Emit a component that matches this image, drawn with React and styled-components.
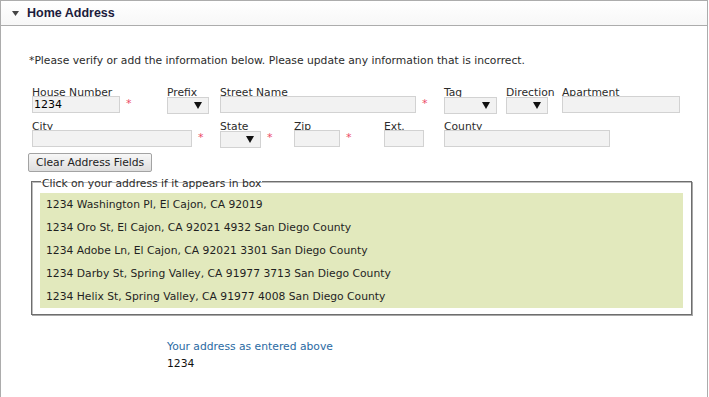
import React from "react";
import styled, { createGlobalStyle } from "styled-components";

const GlobalStyle = createGlobalStyle`
  html, body {
    margin: 0;
    padding: 0;
    background: #ffffff;
  }
  body {
    font-family: "DejaVu Sans", Verdana, sans-serif;
    font-size: 10.75px;
    color: #2b2b2b;
  }
`;

const rows = [
  [
    { label: "House Number", slot: 135, width: 88, value: "1234", required: true },
    { label: "Prefix", slot: 53, width: 42, select: true },
    { label: "Street Name", slot: 224, width: 196, required: true },
    { label: "Tag", slot: 62, width: 53, select: true },
    { label: "Direction", slot: 56, width: 42, select: true },
    { label: "Apartment", width: 118 }
  ],
  [
    { label: "City", slot: 188, width: 160, required: true },
    { label: "State", slot: 74, width: 41, select: true, required: true },
    { label: "Zip", slot: 90, width: 46, required: true },
    { label: "Ext.", slot: 60, width: 40 },
    { label: "County", width: 166 }
  ]
];

const suggestions = [
  "1234 Washington Pl, El Cajon, CA 92019",
  "1234 Oro St, El Cajon, CA 92021 4932 San Diego County",
  "1234 Adobe Ln, El Cajon, CA 92021 3301 San Diego County",
  "1234 Darby St, Spring Valley, CA 91977 3713 San Diego County",
  "1234 Helix St, Spring Valley, CA 91977 4008 San Diego County"
];

function Arrow() {
  return (
    <svg width="8" height="7" viewBox="0 0 8 7">
      <polygon points="0,0 8,0 4,7" fill="#111" />
    </svg>
  );
}

export default function App() {
  return (
    <>
      <GlobalStyle />
      <Panel>
        <Header>
          <Caret>
            <svg width="7" height="5" viewBox="0 0 7 5">
              <polygon points="0,0 7,0 3.5,5" fill="#444" />
            </svg>
          </Caret>
          <h3>Home Address</h3>
        </Header>
        <Body>
          <Note>*Please verify or add the information below. Please update any information that is incorrect.</Note>
          {rows.map((row, i) => (
            <FieldRow key={i}>
              {row.map((f) => (
                <Field key={f.label} $slot={f.slot}>
                  <Label>{f.label}</Label>
                  <InputRow>
                    {f.select ? (
                      <SelectBox $width={f.width}>
                        <Arrow />
                      </SelectBox>
                    ) : (
                      <TextInput $width={f.width} defaultValue={f.value || ""} />
                    )}
                    {f.required && <Required>*</Required>}
                  </InputRow>
                </Field>
              ))}
            </FieldRow>
          ))}
          <ClearButton>Clear Address Fields</ClearButton>
          <Matches>
            <legend><span>Click on your address if it appears in box</span></legend>
            <MatchList>
              {suggestions.map((s) => (
                <MatchItem key={s}>{s}</MatchItem>
              ))}
            </MatchList>
          </Matches>
          <Entered>
            <p className="title">Your address as entered above</p>
            <p>1234</p>
          </Entered>
        </Body>
      </Panel>
    </>
  );
}

const Panel = styled.div`
  width: 708px;
  min-height: 397px;
  box-sizing: border-box;
  border: 1px solid #acacac;
  border-bottom: none;
`;

const Header = styled.div`
  height: 24px;
  display: flex;
  align-items: center;
  padding-left: 11px;
  background: linear-gradient(#ffffff, #f7f7f7);
  border-bottom: 1px solid #acacac;
  h3 {
    margin: 0;
    font-family: "Liberation Sans", Arial, sans-serif;
    font-size: 12.5px;
    font-weight: bold;
    color: #1c1c3c;
  }
`;

const Caret = styled.span`
  display: flex;
  margin-right: 8px;
  margin-top: 1px;
`;

const Body = styled.div`
  padding: 28px 0 0 27px;
`;

const Note = styled.p`
  margin: 0 0 17px 1px;
  line-height: 14px;
`;

const FieldRow = styled.div`
  display: flex;
  margin: 0 0 5px 4px;
`;

const Field = styled.div`
  display: flex;
  flex-direction: column;
  width: ${(p) => (p.$slot ? `${p.$slot}px` : "auto")};
  flex-shrink: 0;
`;

const Label = styled.label`
  display: block;
  height: 11px;
  line-height: 15px;
  white-space: nowrap;
  position: relative;
  z-index: 0;
`;

const InputRow = styled.div`
  display: flex;
  align-items: center;
  position: relative;
  z-index: 1;
`;

const TextInput = styled.input`
  box-sizing: border-box;
  width: ${(p) => p.$width}px;
  height: 17px;
  margin: 0;
  padding: 0 1px;
  border: 1px solid #d2d2d2;
  background: #f2f2f2;
  font-family: "DejaVu Sans", Verdana, sans-serif;
  font-size: 11px;
  color: #000;
  outline: none;
`;

const SelectBox = styled.div`
  box-sizing: border-box;
  width: ${(p) => p.$width}px;
  height: 17px;
  margin-top: 1px;
  border: 1px solid #d2d2d2;
  background: #f2f2f2;
  display: flex;
  align-items: center;
  justify-content: flex-end;
  padding-right: 6px;
`;

const Required = styled.span`
  color: #ec4a66;
  font-size: 11px;
  margin-left: 6px;
  margin-top: -3px;
`;

const ClearButton = styled.button`
  display: block;
  box-sizing: border-box;
  height: 19px;
  margin: 0 0 4px 0;
  padding: 0 7px;
  border: 1px solid #a3a3a3;
  border-radius: 2px;
  background: linear-gradient(#f7f7f7, #dedede);
  font-family: "DejaVu Sans", Verdana, sans-serif;
  font-size: 10.75px;
  color: #222;
`;

const Matches = styled.fieldset`
  box-sizing: border-box;
  width: 661px;
  margin: 0 0 0 3px;
  padding: 6px 8px 6px 8px;
  border: 1px solid #6e6e6e;
  box-shadow: 1px 1px 0 #a8a8a8, inset 1px 1px 0 #bdbdbd;
  legend {
    padding: 0 1px;
    margin-left: 1px;
    line-height: 11px;
    color: #2b2b2b;
    span {
      position: relative;
      top: 2px;
    }
  }
`;

const MatchList = styled.div`
  background: #e2e9bd;
`;

const MatchItem = styled.div`
  height: 23px;
  line-height: 23px;
  padding-left: 6px;
  color: #1f1f1f;
  cursor: pointer;
`;

const Entered = styled.div`
  margin: 23px 0 0 139px;
  p {
    margin: 0;
    line-height: 17px;
    color: #111;
  }
  .title {
    color: #2a6aa3;
  }
`;
